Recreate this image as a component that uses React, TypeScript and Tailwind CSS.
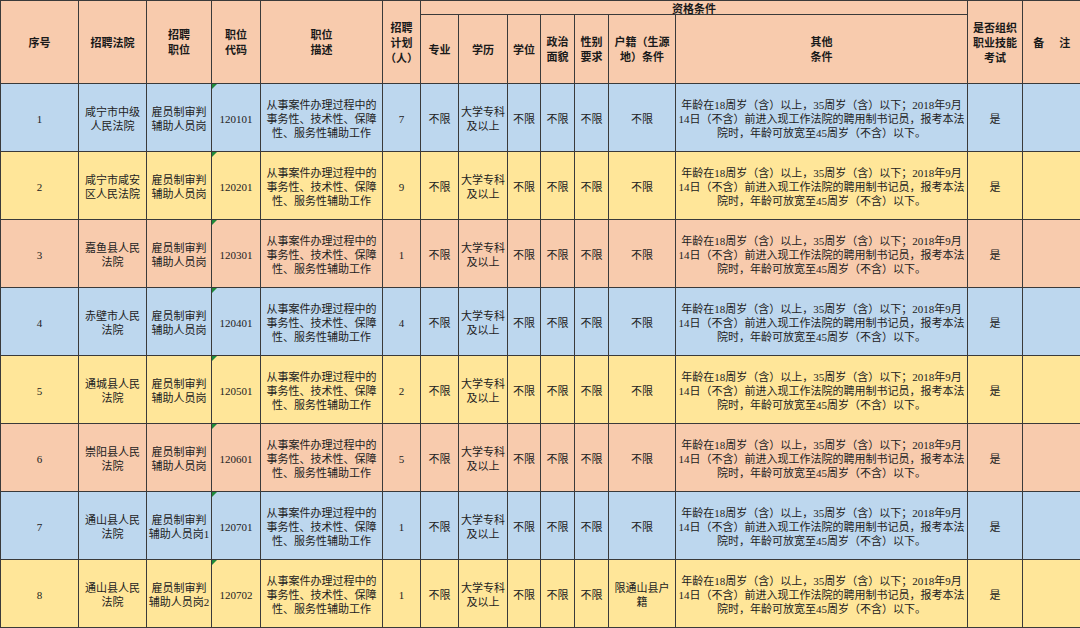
import React from "react";

const font = { fontFamily: '"Liberation Serif", "Noto Sans CJK SC", serif' };

const widths = [78, 68, 65, 49, 122, 38, 38, 49, 33, 34, 34, 67, 292, 55, 58];

const rowBg = ["bg-[#bdd7ee]", "bg-[#ffe699]", "bg-[#f8cbad]"];

const rows = [
  { n: "1", court: ["咸宁市中级", "人民法院"], post: ["雇员制审判", "辅助人员岗"], code: "120101", plan: "7", hukou: ["不限"] },
  { n: "2", court: ["咸宁市咸安", "区人民法院"], post: ["雇员制审判", "辅助人员岗"], code: "120201", plan: "9", hukou: ["不限"] },
  { n: "3", court: ["嘉鱼县人民", "法院"], post: ["雇员制审判", "辅助人员岗"], code: "120301", plan: "1", hukou: ["不限"] },
  { n: "4", court: ["赤壁市人民", "法院"], post: ["雇员制审判", "辅助人员岗"], code: "120401", plan: "4", hukou: ["不限"] },
  { n: "5", court: ["通城县人民", "法院"], post: ["雇员制审判", "辅助人员岗"], code: "120501", plan: "2", hukou: ["不限"] },
  { n: "6", court: ["崇阳县人民", "法院"], post: ["雇员制审判", "辅助人员岗"], code: "120601", plan: "5", hukou: ["不限"] },
  { n: "7", court: ["通山县人民", "法院"], post: ["雇员制审判", "辅助人员岗1"], code: "120701", plan: "1", hukou: ["不限"] },
  { n: "8", court: ["通山县人民", "法院"], post: ["雇员制审判", "辅助人员岗2"], code: "120702", plan: "1", hukou: ["限通山县户", "籍"] },
];

const desc = ["从事案件办理过程中的", "事务性、技术性、保障", "性、服务性辅助工作"];
const other = [
  "年龄在18周岁（含）以上，35周岁（含）以下；2018年9月",
  "14日（不含）前进入现工作法院的聘用制书记员，报考本法",
  "院时，年龄可放宽至45周岁（不含）以下。",
];

const th = "border border-[#3a3a3a] p-0 text-center align-middle";
const td = "border border-[#3a3a3a] p-0 pt-[3px] text-center align-middle";

function Lines({ items }: { items: string[] }) {
  return (
    <>
      {items.map((t, i) => (
        <div key={i} className="whitespace-nowrap">{t}</div>
      ))}
    </>
  );
}

export default function App() {
  return (
    <div className="w-[1080px] h-[628px] overflow-hidden bg-white" style={font}>
      <table className="w-[1080px] table-fixed border-collapse border-l border-l-[#9a9a9a] text-[11px] leading-[14px] text-[#222]">
        <colgroup>
          {widths.map((w, i) => (
            <col key={i} style={{ width: w }} />
          ))}
        </colgroup>
        <thead
          className="bg-[#f8cbad] font-bold leading-[15px] text-[#1a1a1a]"
          style={{ fontFamily: '"Noto Sans CJK SC", sans-serif' }}
        >
          <tr className="h-[14px]">
            <th rowSpan={2} className={th}>序号</th>
            <th rowSpan={2} className={th}>招聘法院</th>
            <th rowSpan={2} className={th}>招聘<br />职位</th>
            <th rowSpan={2} className={th}>职位<br />代码</th>
            <th rowSpan={2} className={th}>职位<br />描述</th>
            <th rowSpan={2} className={th}>招聘<br />计划<br />（人）</th>
            <th colSpan={7} className={`${th} leading-[12px]`}>资格条件</th>
            <th rowSpan={2} className={th}>是否组织<br />职业技能<br />考试</th>
            <th rowSpan={2} className={`${th} border-r-0`}>
              <span>备</span>
              <span className="ml-[15px]">注</span>
            </th>
          </tr>
          <tr className="h-[69px]">
            <th className={th}>专业</th>
            <th className={th}>学历</th>
            <th className={th}>学位</th>
            <th className={th}>政治<br />面貌</th>
            <th className={th}>性别<br />要求</th>
            <th className={th}>户籍（生源<br />地）条件</th>
            <th className={th}>其他<br />条件</th>
          </tr>
        </thead>
        <tbody>
          {rows.map((r, i) => (
            <tr key={r.code} className={`h-[68px] ${rowBg[i % 3]}`}>
              <td className={td}>{r.n}</td>
              <td className={td}><Lines items={r.court} /></td>
              <td className={td}><Lines items={r.post} /></td>
              <td className={`${td} relative`}>
                <span className="absolute left-0 top-0 h-0 w-0 border-t-[5px] border-r-[5px] border-t-[#1e8a3a] border-r-transparent" />
                {r.code}
              </td>
              <td className={td}><Lines items={desc} /></td>
              <td className={td}>{r.plan}</td>
              <td className={td}>不限</td>
              <td className={td}><Lines items={["大学专科", "及以上"]} /></td>
              <td className={td}>不限</td>
              <td className={td}>不限</td>
              <td className={td}>不限</td>
              <td className={td}><Lines items={r.hukou} /></td>
              <td className={td}><Lines items={other} /></td>
              <td className={td}>是</td>
              <td className={`${td} border-r-0`}></td>
            </tr>
          ))}
        </tbody>
      </table>
    </div>
  );
}
